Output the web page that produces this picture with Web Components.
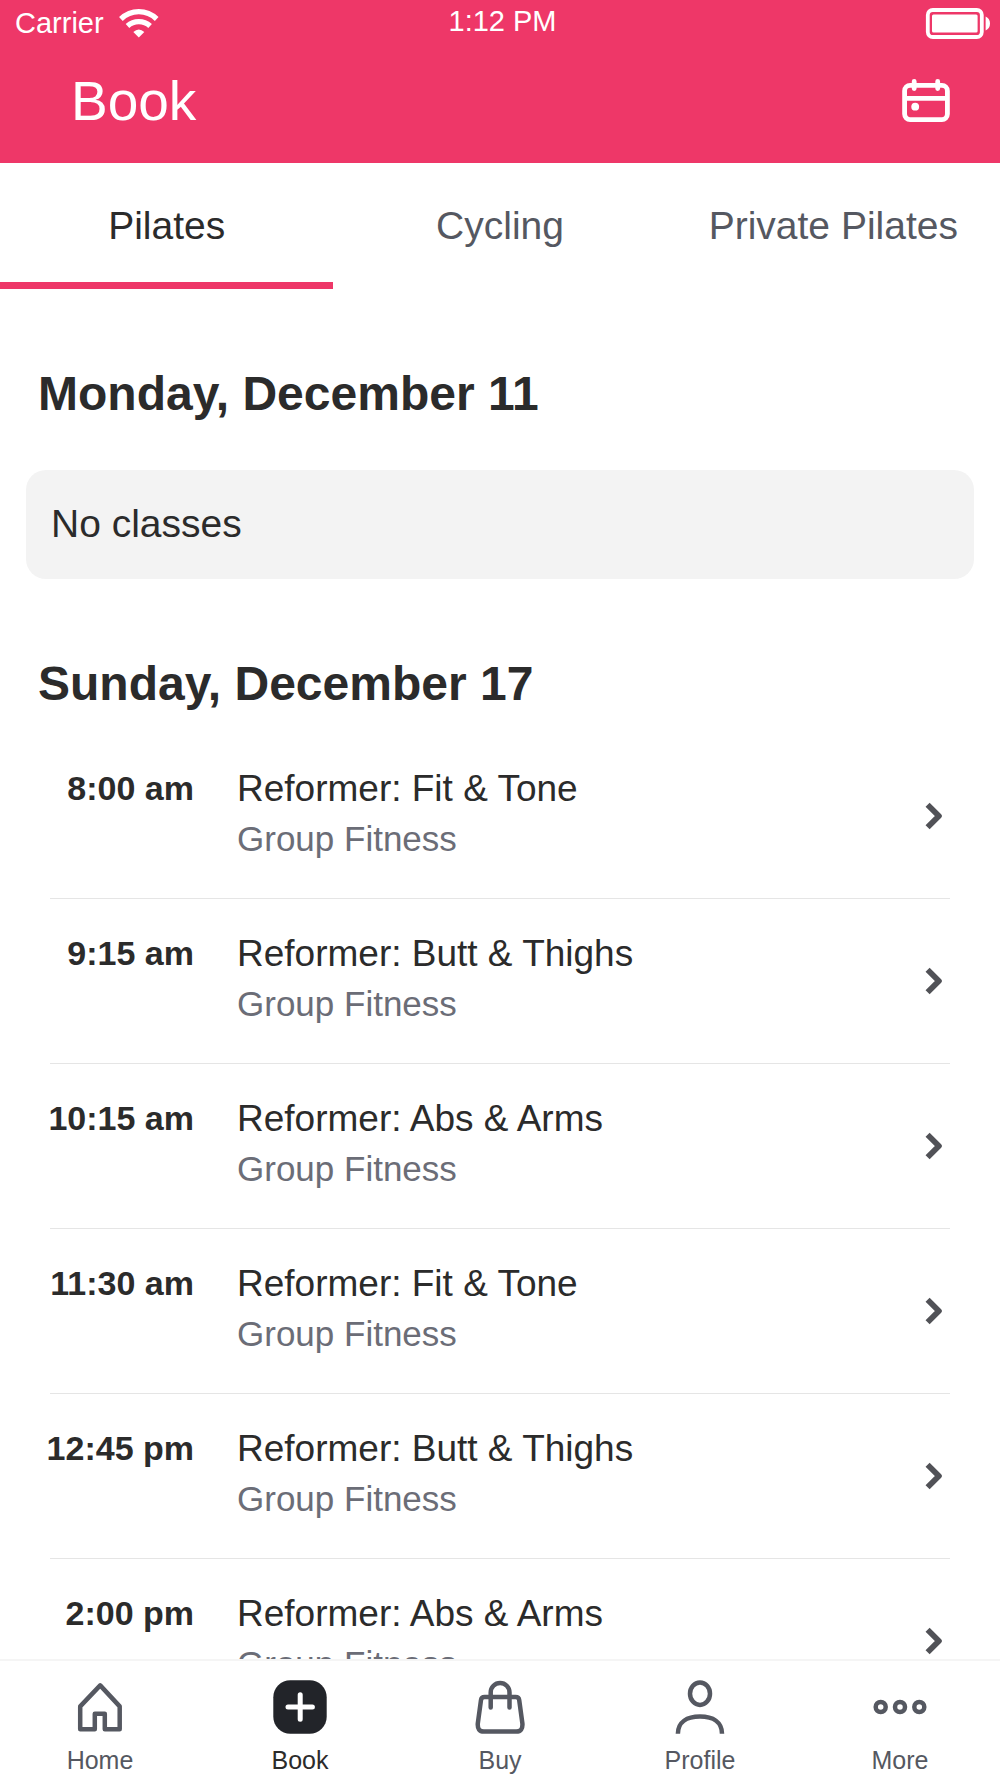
<!DOCTYPE html>
<html lang="en">
<head>
<meta charset="utf-8">
<meta name="viewport" content="width=device-width, initial-scale=1">
<title>Book</title>
<style>
  :root {
    --color-brand: #ee3768;
    --color-ink: #2b2b2b;
    --color-muted: #555861;
    --color-soft: #6b6d77;
    --color-line: #e5e5e5;
  }
  body {
    margin: 0;
    background: #fff;
    color: var(--color-ink);
    font-family: "Liberation Sans", Arial, sans-serif;
  }
</style>
</head>
<body>
<booking-app>
  <status-bar slot="header" carrier="Carrier" time="1:12 PM"></status-bar>
  <title-bar slot="header">Book</title-bar>
  <class-tabs slot="header">
    <class-tab selected>Pilates</class-tab>
    <class-tab>Cycling</class-tab>
    <class-tab>Private Pilates</class-tab>
  </class-tabs>

  <day-section>
    <span slot="date">Monday, December 11</span>
    <empty-note>No classes</empty-note>
  </day-section>
  <day-section>
    <span slot="date">Sunday, December 17</span>
    <class-row time="8:00 am" category="Group Fitness">Reformer: Fit &amp; Tone</class-row>
    <class-row time="9:15 am" category="Group Fitness">Reformer: Butt &amp; Thighs</class-row>
    <class-row time="10:15 am" category="Group Fitness">Reformer: Abs &amp; Arms</class-row>
    <class-row time="11:30 am" category="Group Fitness">Reformer: Fit &amp; Tone</class-row>
    <class-row time="12:45 pm" category="Group Fitness">Reformer: Butt &amp; Thighs</class-row>
    <class-row time="2:00 pm" category="Group Fitness">Reformer: Abs &amp; Arms</class-row>
  </day-section>

  <nav-item slot="nav" icon="home">Home</nav-item>
  <nav-item slot="nav" icon="book" current>Book</nav-item>
  <nav-item slot="nav" icon="buy">Buy</nav-item>
  <nav-item slot="nav" icon="profile">Profile</nav-item>
  <nav-item slot="nav" icon="more">More</nav-item>
</booking-app>

<script>
/**
 * `<booking-app>`: full-height shell. Header and nav stay put, the
 * schedule between them scrolls.
 */
class BookingApp extends HTMLElement {
  constructor() {
    super();
    this.attachShadow({ mode: 'open' }).innerHTML = `
      <style>
        :host { display: flex; flex-direction: column; height: 100vh; }
        main { flex: 1; min-height: 0; overflow-y: auto; scrollbar-width: none; }
        nav { display: flex; border-top: 2px solid #f5f5f5; background: #fff; }
      </style>
      <header><slot name="header"></slot></header>
      <main><slot></slot></main>
      <nav aria-label="Main"><slot name="nav"></slot></nav>
    `;
  }
}

/**
 * `<status-bar>`: carrier, clock and battery.
 * @attr {string} carrier
 * @attr {string} time
 */
class StatusBar extends HTMLElement {
  constructor() {
    super();
    this.attachShadow({ mode: 'open' }).innerHTML = `
      <style>
        :host {
          display: grid; grid-template-columns: 1fr auto 1fr; align-items: center;
          height: 46px; padding: 0 10px 0 15px;
          background: var(--color-brand); color: #fff;
          font-size: 29px; line-height: 42px;
        }
        .carrier { display: flex; align-items: center; gap: 15px; }
        .time { align-self: start; }
        .battery { justify-self: end; }
        svg { display: block; }
      </style>
      <div class="carrier">
        <span>${this.getAttribute('carrier')}</span>
        <svg width="40" height="29" viewBox="0 0 40 29" fill="none" stroke="#fff" stroke-width="5.3" aria-hidden="true">
          <path d="M1.9 10Q9.5 2.7 19.8 2.7T37.7 10"/>
          <path d="M8.5 17Q13.3 12.6 19.8 12.6T31.1 17"/>
          <path d="M19.8 28.6L14.3 23Q19.8 18 25.3 23Z" fill="#fff" stroke="none"/>
        </svg>
      </div>
      <span class="time">${this.getAttribute('time')}</span>
      <svg class="battery" width="65" height="31" viewBox="0 0 65 31" aria-hidden="true">
        <rect x="2.8" y="2" width="54" height="27" rx="5" fill="none" stroke="#fff" stroke-width="3.8"/>
        <rect x="7" y="6.6" width="45.6" height="17.8" rx="1.5" fill="#fff"/>
        <path d="M60.6 8.6Q65 10.6 65 15.5T60.6 22.4Z" fill="#fff"/>
      </svg>
    `;
  }
}

/** `<title-bar>`: screen title with the calendar button. */
class TitleBar extends HTMLElement {
  constructor() {
    super();
    this.attachShadow({ mode: 'open' }).innerHTML = `
      <style>
        :host {
          display: flex; align-items: center; justify-content: space-between;
          padding: 25px 50px 32px 71px;
          background: var(--color-brand); color: #fff;
        }
        h1 { margin: 0; font-size: 55px; line-height: 60px; font-weight: 400; }
        button { padding: 0; border: 0; background: none; color: inherit; cursor: pointer; }
        svg { display: block; }
      </style>
      <h1><slot></slot></h1>
      <button type="button" aria-label="Pick a date">
        <svg width="48" height="44" viewBox="0 0 48 44" fill="none" stroke="currentColor" stroke-width="4.8">
          <rect x="2.6" y="6.4" width="42.8" height="34.2" rx="5.5"/>
          <path d="M2.6 19.4H45.4"/>
          <path d="M12.2 2.5V9.5M35.7 2.5V9.5" stroke-linecap="round"/>
          <circle cx="13.2" cy="27.7" r="3.9" fill="currentColor" stroke="none"/>
        </svg>
      </button>
    `;
  }
}

/** `<class-tabs>`: equal-width row of `<class-tab>`. */
class ClassTabs extends HTMLElement {
  constructor() {
    super();
    this.attachShadow({ mode: 'open' }).innerHTML = `
      <style>
        :host { display: flex; background: #fff; }
      </style>
      <slot></slot>
    `;
    this.addEventListener('click', (e) => {
      const tab = e.target.closest('class-tab');
      if (!tab) return;
      for (const t of this.children) t.toggleAttribute('selected', t === tab);
    });
  }
}

/**
 * `<class-tab>`
 * @attr {boolean} [selected] - Draws the underline.
 */
class ClassTab extends HTMLElement {
  static get observedAttributes() {
    return ['selected'];
  }

  constructor() {
    super();
    this.attachShadow({ mode: 'open' }).innerHTML = `
      <style>
        :host { display: block; flex: 1 1 0; min-width: 0; }
        button {
          display: block; width: 100%;
          padding: 38px 0 31px;
          border: 0; border-bottom: 7px solid transparent; background: none;
          color: var(--color-muted);
          font: inherit; font-size: 39px; line-height: 50px;
          white-space: nowrap; cursor: pointer;
        }
        :host([selected]) button { color: var(--color-ink); border-color: var(--color-brand); }
      </style>
      <button type="button"><slot></slot></button>
    `;
  }

  attributeChangedCallback() {
    this.shadowRoot.querySelector('button')
      .setAttribute('aria-pressed', String(this.hasAttribute('selected')));
  }
}

/** `<day-section>`: date heading (slot="date") and the day's entries. */
class DaySection extends HTMLElement {
  constructor() {
    super();
    this.attachShadow({ mode: 'open' }).innerHTML = `
      <style>
        :host { display: block; padding-top: 75px; }
        h2 { margin: 0 0 20px; padding: 0 38px; font-size: 48px; line-height: 60px; }
      </style>
      <section>
        <h2><slot name="date"></slot></h2>
        <slot></slot>
      </section>
    `;
  }
}

/** `<empty-note>`: grey box for a day without classes. */
class EmptyNote extends HTMLElement {
  constructor() {
    super();
    this.attachShadow({ mode: 'open' }).innerHTML = `
      <style>
        :host {
          display: block; margin: 46px 26px 0; padding: 29px 25px 30px;
          border-radius: 20px; background: #f3f3f3;
          font-size: 39px; line-height: 50px;
        }
        p { margin: 0; }
      </style>
      <p><slot></slot></p>
    `;
  }
}

/**
 * `<class-row>`: one bookable class.
 * @attr {string} time
 * @attr {string} category
 */
class ClassRow extends HTMLElement {
  constructor() {
    super();
    this.attachShadow({ mode: 'open' }).innerHTML = `
      <style>
        :host { display: block; }
        :host::after { content: ""; display: block; height: 1px; margin: 0 50px; background: var(--color-line); }
        a {
          display: grid; grid-template-columns: 194px 1fr auto; column-gap: 43px;
          padding-right: 57px;
          color: inherit; text-decoration: none; line-height: 50px;
        }
        time { padding: 29px 0 35px; font-size: 34px; font-weight: 700; text-align: right; }
        .details { padding: 30px 0 34px; }
        .name, .category { display: block; }
        .name { font-size: 37px; }
        .category { color: var(--color-soft); font-size: 35px; }
        svg { display: block; align-self: center; }
      </style>
      <a href="#class">
        <time>${this.getAttribute('time')}</time>
        <span class="details">
          <span class="name"><slot></slot></span>
          <span class="category">${this.getAttribute('category')}</span>
        </span>
        <svg width="18" height="28" viewBox="0 0 18 28" fill="none" stroke="#515257" stroke-width="5.8" stroke-linejoin="round" aria-hidden="true">
          <path d="M2.6 2.8L13.9 14L2.6 25.2"/>
        </svg>
      </a>
    `;
  }
}

const NAV_ICONS = {
  home: `<path d="M27.2 5.4L46.7 26.4V49.3H31.8V33.8H21.8V49.3H7.2V26.4Z" stroke-linejoin="round"/>`,
  book: `<rect x="0.3" y="0.3" width="53.4" height="53.4" rx="17" fill="#222429" stroke="none"/>
    <path d="M27.2 14.8V39.2M15 27H39.4" stroke="#fff" stroke-width="5" stroke-linecap="round"/>`,
  buy: `<path d="M11.6 17H42.6Q45.8 17 46.2 20L49.4 43.5Q50 51.6 43.2 51.6H10.9Q4.2 51.6 4.8 43.5L8 20Q8.4 17 11.6 17Z"/>
    <path d="M17.7 27.5V12.4A9.4 9.4 0 0 1 36.5 12.4V27.5" stroke-linecap="round"/>`,
  profile: `<ellipse cx="27" cy="13.7" rx="10" ry="11.2"/>
    <path d="M4.9 53.7C4.9 42 14 36.5 27 36.5S49 42 49 53.7"/>`,
  more: `<circle cx="7.7" cy="27" r="5"/><circle cx="27" cy="27" r="5"/><circle cx="46.3" cy="27" r="5"/>`
};

/**
 * `<nav-item>`: bottom navigation link.
 * @attr {string} icon - Key of NAV_ICONS.
 * @attr {boolean} [current]
 */
class NavItem extends HTMLElement {
  constructor() {
    super();
    const icon = this.getAttribute('icon');
    this.attachShadow({ mode: 'open' }).innerHTML = `
      <style>
        :host { display: block; flex: 1 1 0; color: var(--color-muted); }
        :host([current]) { color: var(--color-ink); }
        a {
          display: flex; flex-direction: column; align-items: center; gap: 11px;
          padding: 19px 0 3px;
          color: inherit; text-decoration: none;
          font-size: 25px; line-height: 30px;
        }
        svg { display: block; }
      </style>
      <a href="#${icon}">
        <svg width="54" height="54" viewBox="0 0 54 54" fill="none" stroke="currentColor" stroke-width="4.5" aria-hidden="true">${NAV_ICONS[icon]}</svg>
        <slot></slot>
      </a>
    `;
    if (this.hasAttribute('current')) {
      this.shadowRoot.querySelector('a').setAttribute('aria-current', 'page');
    }
  }
}

customElements.define('booking-app', BookingApp);
customElements.define('status-bar', StatusBar);
customElements.define('title-bar', TitleBar);
customElements.define('class-tabs', ClassTabs);
customElements.define('class-tab', ClassTab);
customElements.define('day-section', DaySection);
customElements.define('empty-note', EmptyNote);
customElements.define('class-row', ClassRow);
customElements.define('nav-item', NavItem);
</script>
</body>
</html>
